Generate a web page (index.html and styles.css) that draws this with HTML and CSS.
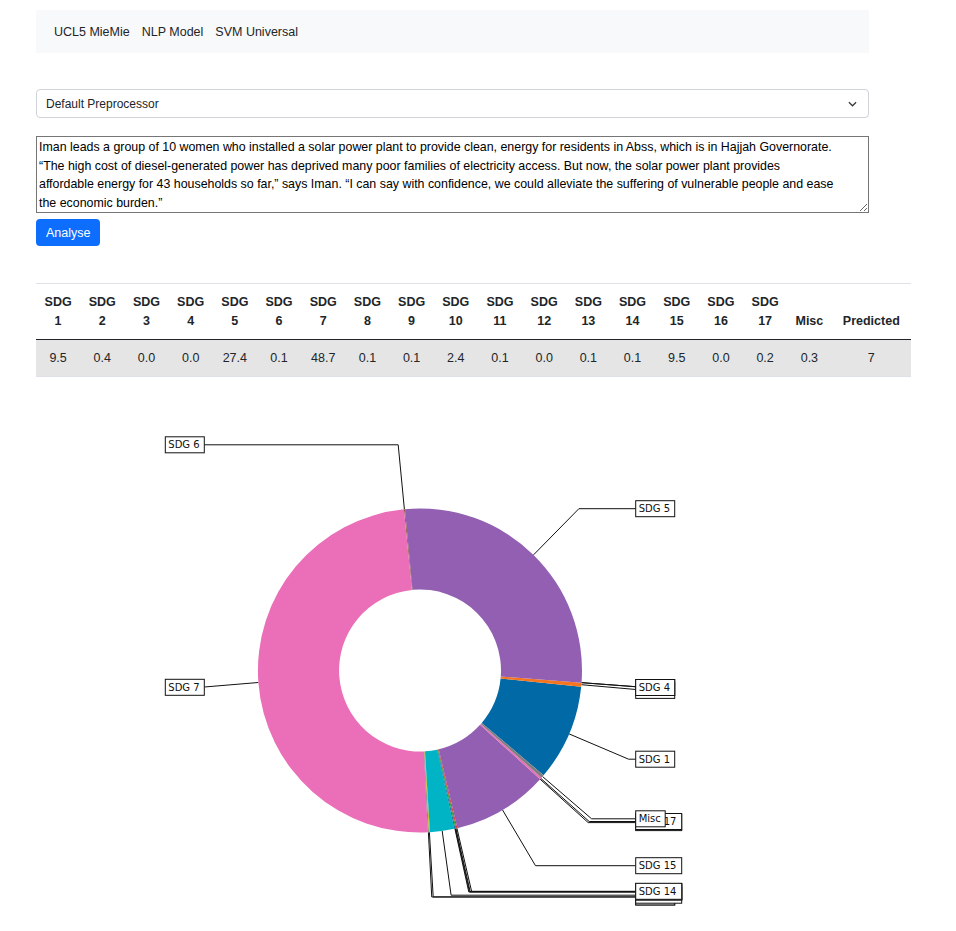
FILE: index.html
```html
<!DOCTYPE html>
<html>
<head>
<meta charset="utf-8">
<title>UCL5 MieMie</title>
<link rel="stylesheet" href="styles.css">
</head>
<body>
<div class="page">
  <nav class="topnav">
    <span>UCL5 MieMie</span>
    <span>NLP Model</span>
    <span>SVM Universal</span>
  </nav>
  <form class="form">
    <div class="select-wrap">
      <select class="select"><option>Default Preprocessor</option></select>
      <svg class="chev" viewBox="0 0 10 6"><path d="M1 1l4 4 4-4"/></svg>
    </div>
    <textarea class="input">Iman leads a group of 10 women who installed a solar power plant to provide clean, energy for residents in Abss, which is in Hajjah Governorate.
“The high cost of diesel-generated power has deprived many poor families of electricity access. But now, the solar power plant provides
affordable energy for 43 households so far,” says Iman. “I can say with confidence, we could alleviate the suffering of vulnerable people and ease
the economic burden.”</textarea>
    <button type="button" class="btn">Analyse</button>
  </form>

  <table class="scores">
    <colgroup>
      <col class="c-sdg"><col class="c-sdg"><col class="c-sdg"><col class="c-sdg"><col class="c-sdg"><col class="c-sdg"><col class="c-sdg"><col class="c-sdg"><col class="c-sdg"><col class="c-sdg"><col class="c-sdg"><col class="c-sdg"><col class="c-sdg"><col class="c-sdg"><col class="c-sdg"><col class="c-sdg"><col class="c-sdg">
      <col class="c-misc"><col class="c-pred">
    </colgroup>
    <thead>
      <tr>
        <th>SDG 1</th><th>SDG 2</th><th>SDG 3</th><th>SDG 4</th><th>SDG 5</th><th>SDG 6</th><th>SDG 7</th><th>SDG 8</th><th>SDG 9</th><th>SDG 10</th><th>SDG 11</th><th>SDG 12</th><th>SDG 13</th><th>SDG 14</th><th>SDG 15</th><th>SDG 16</th><th>SDG 17</th><th>Misc</th><th>Predicted</th>
      </tr>
    </thead>
    <tbody>
      <tr>
        <td>9.5</td><td>0.4</td><td>0.0</td><td>0.0</td><td>27.4</td><td>0.1</td><td>48.7</td><td>0.1</td><td>0.1</td><td>2.4</td><td>0.1</td><td>0.0</td><td>0.1</td><td>0.1</td><td>9.5</td><td>0.0</td><td>0.2</td><td>0.3</td><td>7</td>
      </tr>
    </tbody>
  </table>

  <svg class="chart" width="875" height="530" viewBox="36 385 875 530">
    <g class="ann">
      <polyline points="635.7,759.2 628.6,759.2 569.1,733.9"/>
      <rect x="635.7" y="751.2" width="39" height="16"/><text x="638.7" y="762.8">SDG 1</text>

      <polyline points="646,690.4 581.4,684.7"/>
      <rect x="635.7" y="682.4" width="39" height="16"/><text x="638.7" y="694">SDG 2</text>

      <polyline points="646.2,687.5 581.5,682.65"/>
      <rect x="635.7" y="679.5" width="39" height="16"/><text x="638.7" y="691.1">SDG 3</text>

      <polyline points="646.2,687.5 581.5,682.65"/>
      <rect x="635.7" y="679.5" width="39" height="16"/><text x="638.7" y="691.1">SDG 4</text>

      <polyline points="635.7,508.7 578.9,508.7 533.5,554.9"/>
      <rect x="635.7" y="500.7" width="39" height="16"/><text x="638.7" y="512.3">SDG 5</text>

      <polyline points="204.3,444.8 398.2,444.8 404.4,509.3"/>
      <rect x="165.3" y="436.8" width="39" height="16"/><text x="168.3" y="448.4">SDG 6</text>

      <polyline points="204.3,687 258.4,682.5"/>
      <rect x="165.3" y="679.3" width="39" height="16"/><text x="168.3" y="690.9">SDG 7</text>

      <polyline points="635.7,897 431.75,897 428.4,832.3"/>
      <rect x="635.7" y="889" width="39" height="16"/><text x="638.7" y="900.6">SDG 8</text>

      <polyline points="635.7,896.9 433.2,896.9 429.4,832.2"/>
      <rect x="635.7" y="888.9" width="39" height="16"/><text x="638.7" y="900.5">SDG 9</text>

      <polyline points="635.7,895.2 451.1,895.2 442.2,831"/>
      <rect x="635.7" y="887.2" width="46" height="16"/><text x="638.7" y="898.8">SDG 10</text>

      <polyline points="635.7,892 468.8,892 454.9,828.7"/>
      <rect x="635.7" y="884" width="46" height="16"/><text x="638.7" y="895.6">SDG 11</text>

      <polyline points="635.7,891.8 469.5,891.8 455.4,828.6"/>
      <rect x="635.7" y="883.8" width="46" height="16"/><text x="638.7" y="895.4">SDG 12</text>

      <polyline points="635.7,891.7 470.2,891.7 455.9,828.5"/>
      <rect x="635.7" y="883.7" width="46" height="16"/><text x="638.7" y="895.3">SDG 13</text>

      <polyline points="635.7,891.3 471.6,891.3 456.9,828.2"/>
      <rect x="635.7" y="883.3" width="46" height="16"/><text x="638.7" y="894.9">SDG 14</text>

      <polyline points="635.7,865.7 535.5,865.7 502.5,809.9"/>
      <rect x="635.7" y="857.7" width="46" height="16"/><text x="638.7" y="869.3">SDG 15</text>

      <polyline points="635.7,822.6 588.2,822.6 540.1,779.2"/>
      <rect x="635.7" y="814.6" width="46" height="16"/><text x="638.7" y="826.2">SDG 16</text>

      <polyline points="635.7,821.5 589.2,821.5 540.8,778.4"/>
      <rect x="635.7" y="813.5" width="46" height="16"/><text x="638.7" y="825.1">SDG 17</text>

      <polyline points="635.7,818.8 591.6,818.8 542.5,776.5"/>
      <rect x="635.7" y="810.8" width="29.5" height="16"/><text x="638.7" y="822.4">Misc</text>
    </g>
    <g class="wedges">
      <path fill="#0069a6" d="M543.57 775.27A162 162 0 0 0 581.18 686.74L500.59 678.62A81 81 0 0 1 481.78 722.88Z"/>
      <path fill="#f5761f" d="M581.18 686.74A162 162 0 0 0 581.54 682.65L500.77 676.57A81 81 0 0 1 500.59 678.62Z"/>
      <path fill="#925fb2" d="M581.54 682.65A162 162 0 0 0 404.94 509.2L412.47 589.85A81 81 0 0 1 500.77 676.57Z"/>
      <path fill="#8c564b" d="M404.94 509.2A162 162 0 0 0 403.91 509.3L411.96 589.9A81 81 0 0 1 412.47 589.85Z"/>
      <path fill="#ea6eb8" d="M403.91 509.3A162 162 0 0 0 427.89 832.31L423.94 751.4A81 81 0 0 1 411.96 589.9Z"/>
      <path fill="#7f7f7f" d="M427.89 832.31A162 162 0 0 0 428.91 832.25L424.46 751.38A81 81 0 0 1 423.94 751.4Z"/>
      <path fill="#bcbd22" d="M428.91 832.25A162 162 0 0 0 429.95 832.19L424.97 751.35A81 81 0 0 1 424.46 751.38Z"/>
      <path fill="#00b4c6" d="M429.95 832.19A162 162 0 0 0 454.37 828.81L437.19 749.66A81 81 0 0 1 424.97 751.35Z"/>
      <path fill="#0069a6" d="M454.37 828.81A162 162 0 0 0 455.37 828.59L437.68 749.55A81 81 0 0 1 437.19 749.66Z"/>
      <path fill="#2ca02c" d="M455.37 828.59A162 162 0 0 0 456.39 828.36L438.19 749.43A81 81 0 0 1 437.68 749.55Z"/>
      <path fill="#d62728" d="M456.39 828.36A162 162 0 0 0 457.38 828.13L438.69 749.31A81 81 0 0 1 438.19 749.43Z"/>
      <path fill="#925fb2" d="M457.38 828.13A162 162 0 0 0 540.14 779.17L480.07 724.84A81 81 0 0 1 438.69 749.31Z"/>
      <path fill="#ea6eb8" d="M540.14 779.17A162 162 0 0 0 541.52 777.63L480.76 724.07A81 81 0 0 1 480.07 724.84Z"/>
      <path fill="#7f7f7f" d="M541.52 777.63A162 162 0 0 0 543.57 775.27L481.78 722.88A81 81 0 0 1 480.76 724.07Z"/>
    </g>
  </svg>
</div>
</body>
</html>
```
FILE: styles.css
```css
body {
  margin: 0;
  background: #fff;
  color: #212529;
  font-family: "Liberation Sans", Arial, sans-serif;
}

.page {
  padding: 10px 0 0 36px;
}

.topnav {
  box-sizing: border-box;
  width: 833px;
  height: 43px;
  padding-left: 18px;
  display: flex;
  align-items: center;
  gap: 12px;
  background: #f8f9fa;
  font-size: 12.5px;
  color: #212529;
}

.form {
  margin-top: 36px;
  width: 833px;
}

.select-wrap {
  position: relative;
}

.select {
  display: block;
  box-sizing: border-box;
  width: 100%;
  height: 29px;
  padding: 0 30px 0 9px;
  appearance: none;
  -webkit-appearance: none;
  border: 1px solid #ced4da;
  border-radius: 4px;
  background: #fff;
  color: #212529;
  font: 12px "Liberation Sans", Arial, sans-serif;
}

.chev {
  position: absolute;
  right: 12px;
  top: 12px;
  width: 9px;
  height: 6px;
  fill: none;
  stroke: #343a40;
  stroke-width: 1.4;
}

.input {
  display: block;
  box-sizing: border-box;
  width: 100%;
  height: 77px;
  margin: 18px 0 0;
  padding: 1px 1px 2px 2px;
  border: 1px solid #767676;
  border-radius: 0;
  color: #000;
  font: 12.4px/18.5px "Liberation Sans", Arial, sans-serif;
  resize: both;
}

.btn {
  display: block;
  height: 27px;
  margin-top: 6px;
  padding: 0 10px;
  border: 0;
  border-radius: 4px;
  background: #0d6efd;
  color: #fff;
  font: 12.5px "Liberation Sans", Arial, sans-serif;
}

.scores {
  margin-top: 37px;
  width: 875px;
  table-layout: fixed;
  border-collapse: collapse;
  border-top: 1px solid #dee2e6;
  font-size: 12.5px;
  color: #212529;
}

.c-sdg { width: 44.2px; }
.c-misc { width: 44.4px; }
.c-pred { width: 79.2px; }

.scores th {
  padding: 9px 6px 8px;
  line-height: 19px;
  font-weight: 700;
  text-align: center;
  vertical-align: bottom;
  border-bottom: 1px solid #212529;
}

.scores td {
  padding: 9px 6px 8px;
  line-height: 19px;
  text-align: center;
  background: #e5e5e5;
  border-bottom: 1px solid #dee2e6;
}

.chart {
  display: block;
  margin-top: 8px;
}

.ann polyline {
  fill: none;
  stroke: #111;
  stroke-width: 1;
}

.ann rect {
  fill: #fff;
  stroke: #111;
  stroke-width: 1;
}

.ann text {
  font-family: "DejaVu Sans", sans-serif;
  font-size: 10px;
  fill: #111;
}
```
